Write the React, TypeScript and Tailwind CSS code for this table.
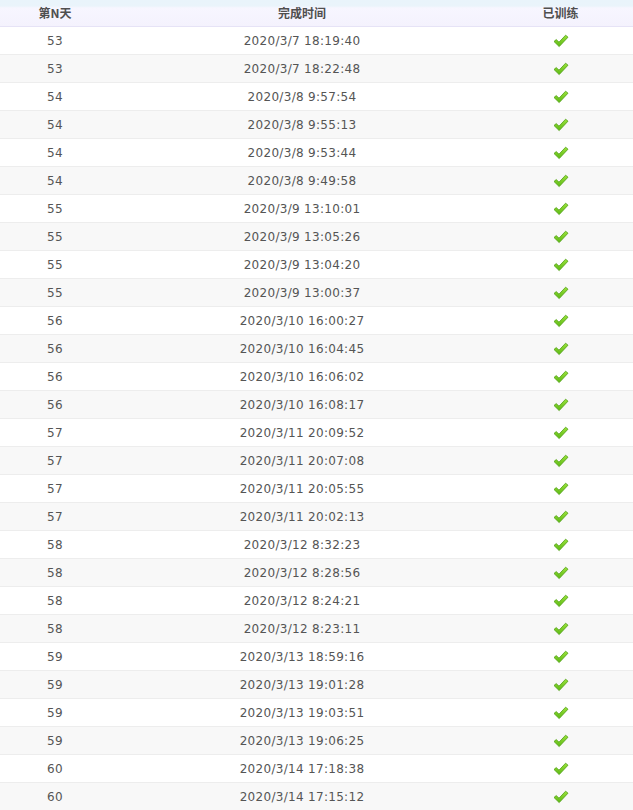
const rows: [string, string][] = [
  ['53', '2020/3/7 18:19:40'],
  ['53', '2020/3/7 18:22:48'],
  ['54', '2020/3/8 9:57:54'],
  ['54', '2020/3/8 9:55:13'],
  ['54', '2020/3/8 9:53:44'],
  ['54', '2020/3/8 9:49:58'],
  ['55', '2020/3/9 13:10:01'],
  ['55', '2020/3/9 13:05:26'],
  ['55', '2020/3/9 13:04:20'],
  ['55', '2020/3/9 13:00:37'],
  ['56', '2020/3/10 16:00:27'],
  ['56', '2020/3/10 16:04:45'],
  ['56', '2020/3/10 16:06:02'],
  ['56', '2020/3/10 16:08:17'],
  ['57', '2020/3/11 20:09:52'],
  ['57', '2020/3/11 20:07:08'],
  ['57', '2020/3/11 20:05:55'],
  ['57', '2020/3/11 20:02:13'],
  ['58', '2020/3/12 8:32:23'],
  ['58', '2020/3/12 8:28:56'],
  ['58', '2020/3/12 8:24:21'],
  ['58', '2020/3/12 8:23:11'],
  ['59', '2020/3/13 18:59:16'],
  ['59', '2020/3/13 19:01:28'],
  ['59', '2020/3/13 19:03:51'],
  ['59', '2020/3/13 19:06:25'],
  ['60', '2020/3/14 17:18:38'],
  ['60', '2020/3/14 17:15:12'],
]

function Check() {
  return (
    <svg width="16" height="14" viewBox="0 0 16 14">
      <defs>
        <linearGradient id="chk" x1="0" y1="0" x2="0" y2="1">
          <stop offset="0" stopColor="#9be33a" />
          <stop offset="1" stopColor="#5cb814" />
        </linearGradient>
      </defs>
      <path
        d="M1 7.5 L3.2 5.6 L6 8.2 L12.6 1.2 L15 3.2 L6.2 12.6 Z"
        fill="url(#chk)"
        stroke="#4d9e10"
        strokeWidth="0.8"
        strokeLinejoin="round"
      />
    </svg>
  )
}

export default function App() {
  return (
    <div className="w-[633px] bg-white text-[12px] text-[#555] font-['DejaVu_Sans','Noto_Sans_CJK_SC',sans-serif]">
      {/* Header */}
      <div className="grid grid-cols-[110px_384px_139px] h-[27px] items-center border-b border-[#e6e3f6] bg-[linear-gradient(to_bottom,#e9f4fb_0px,#eaf4fb_6px,#f7f6ff_8px,#f4f2fd_100%)] font-bold text-[#4f4f4f] font-['Noto_Sans_CJK_SC',sans-serif]">
        <div className="text-center">第N天</div>
        <div className="text-center">完成时间</div>
        <div className="text-center -translate-x-[3px]">已训练</div>
      </div>
      {rows.map(([day, time], i) => (
        <div
          key={i}
          className={`grid grid-cols-[110px_384px_139px] h-[28px] items-center border-b border-[#ededed] tracking-[0.3px] ${
            i % 2 === 1 ? 'bg-[#f8f8f8]' : 'bg-white'
          }`}
        >
          <div className="text-center">{day}</div>
          <div className="text-center">{time}</div>
          <div className="flex justify-center -translate-x-[3px]">
            <Check />
          </div>
        </div>
      ))}
    </div>
  )
}
